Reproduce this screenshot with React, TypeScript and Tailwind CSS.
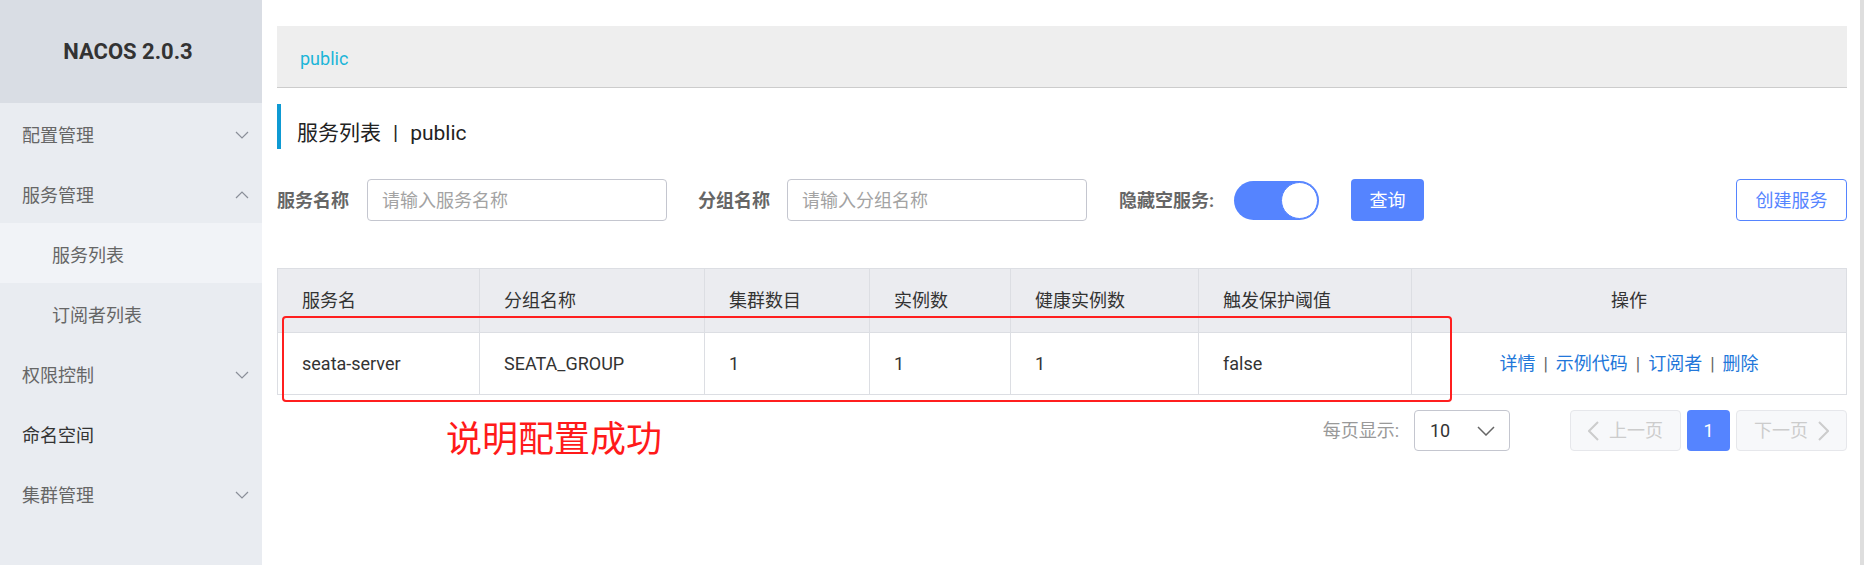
import React from "react";

const FONT = '"Roboto", "Noto Sans CJK SC", "Noto Sans", sans-serif';

function ChevronDown({ up = false }: { up?: boolean }) {
  return (
    <svg width="14" height="8" viewBox="0 0 14 8" fill="none" className="block">
      {up ? (
        <polyline points="1,7 7,1 13,7" stroke="#8a8f99" strokeWidth="1.2" fill="none" />
      ) : (
        <polyline points="1,1 7,7 13,1" stroke="#8a8f99" strokeWidth="1.2" fill="none" />
      )}
    </svg>
  );
}

function MenuItem({
  label,
  sub = false,
  selected = false,
  arrow,
  dark = false,
}: {
  label: string;
  sub?: boolean;
  selected?: boolean;
  arrow?: "up" | "down";
  dark?: boolean;
}) {
  return (
    <div
      className={`h-[60px] flex items-center justify-between pr-[13px] pt-[4px] text-[18px] ${
        sub ? "pl-[52px]" : "pl-[22px]"
      } ${selected ? "bg-[#f1f3f7]" : ""} ${dark ? "text-[#333333]" : "text-[#666666]"}`}
    >
      <span>{label}</span>
      {arrow ? <ChevronDown up={arrow === "up"} /> : null}
    </div>
  );
}

const cols = "grid grid-cols-[202px_225px_165px_141px_188px_213px_1fr]";

export default function App() {
  return (
    <div
      className="flex w-[1864px] h-[565px] bg-white overflow-hidden"
      style={{ fontFamily: FONT }}
    >
      {/* Sidebar */}
      <aside className="w-[262px] shrink-0 bg-[#e9ecf1] flex flex-col">
        <div className="h-[103px] bg-[#d9dde4] flex items-center justify-center text-[22px] font-bold text-[#333333] pr-[6px]">
          NACOS 2.0.3
        </div>
        <MenuItem label="配置管理" arrow="down" />
        <MenuItem label="服务管理" arrow="up" />
        <MenuItem label="服务列表" sub selected />
        <MenuItem label="订阅者列表" sub />
        <MenuItem label="权限控制" arrow="down" />
        <MenuItem label="命名空间" dark />
        <MenuItem label="集群管理" arrow="down" />
      </aside>

      {/* Main */}
      <main className="relative flex-1 pl-[15px] pr-[13px] pt-[26px]">
        {/* breadcrumb bar */}
        <div className="h-[62px] bg-[#eeeeee] border-b border-[#cccccc] flex items-center pl-[23px] pt-[4px] text-[18px] text-[#1bb5d8]">
          public
        </div>

        {/* title */}
        <div className="mt-[16px] h-[45px] border-l-4 border-[#0e9ad3] pl-[16px] pt-[14px] flex items-center text-[21px] text-[#222222]">
          <span>服务列表</span>
          <span className="mx-[12px]">|</span>
          <span>public</span>
        </div>

        {/* search row */}
        <div className="mt-[30px] h-[42px] flex items-center text-[18px]">
          <span className="font-bold text-[#666666]">服务名称</span>
          <div className="ml-[18px] w-[300px] h-[42px] border border-[#c4c6cf] rounded-[4px] pl-[14px] flex items-center text-[#a3a3a3]">
            请输入服务名称
          </div>
          <span className="ml-[31px] font-bold text-[#666666]">分组名称</span>
          <div className="ml-[17px] w-[300px] h-[42px] border border-[#c4c6cf] rounded-[4px] pl-[14px] flex items-center text-[#a3a3a3]">
            请输入分组名称
          </div>
          <span className="ml-[32px] font-bold text-[#666666]">隐藏空服务:</span>
          <div className="ml-[20px] w-[85px] h-[39px] rounded-full bg-[#5584ff] flex items-center justify-end pr-[1px]">
            <div className="w-[37px] h-[37px] rounded-full bg-white border border-[#5584ff]" />
          </div>
          <div className="ml-[32px] w-[73px] h-[42px] rounded-[4px] bg-[#5584ff] text-white flex items-center justify-center">
            查询
          </div>
          <div className="ml-auto w-[111px] h-[42px] rounded-[4px] border border-[#5584ff] text-[#5584ff] bg-white flex items-center justify-center">
            创建服务
          </div>
        </div>

        {/* table */}
        <div className="mt-[47px] border border-[#dcdee3] text-[18px] text-[#333333]">
          <div className={`${cols} bg-[#ebecf0] border-b border-[#dcdee3] h-[64px]`}>
            {["服务名", "分组名称", "集群数目", "实例数", "健康实例数", "触发保护阈值"].map((h) => (
              <div key={h} className="border-r border-[#dcdee3] flex items-center pl-[24px]">
                {h}
              </div>
            ))}
            <div className="flex items-center justify-center">操作</div>
          </div>
          <div className={`${cols} h-[61px]`}>
            {["seata-server", "SEATA_GROUP", "1", "1", "1", "false"].map((c, i) => (
              <div key={i} className="border-r border-[#dcdee3] flex items-center pl-[24px]">
                {c}
              </div>
            ))}
            <div className="flex items-center justify-center text-[#2277da]">
              <span>详情</span>
              <span className="mx-[8px] text-[#666666]">|</span>
              <span>示例代码</span>
              <span className="mx-[8px] text-[#666666]">|</span>
              <span>订阅者</span>
              <span className="mx-[8px] text-[#666666]">|</span>
              <span>删除</span>
            </div>
          </div>
        </div>

        {/* pagination */}
        <div className="mt-[15px] h-[41px] flex items-center justify-end text-[18px]">
          <span className="text-[#999999]">每页显示:</span>
          <div className="ml-[15px] w-[96px] h-[41px] border border-[#c4c6cf] rounded-[4px] flex items-center justify-between pl-[15px] pr-[14px] text-[#333333]">
            <span>10</span>
            <svg width="18" height="10" viewBox="0 0 18 10" fill="none">
              <polyline points="1,1 9,9 17,1" stroke="#666666" strokeWidth="1.5" fill="none" />
            </svg>
          </div>
          <div className="ml-[60px] w-[111px] h-[41px] border border-[#e6e7eb] bg-[#f7f8fa] rounded-[4px] flex items-center justify-center text-[#cccccc]">
            <svg width="11" height="20" viewBox="0 0 11 20" fill="none" className="mr-[10px]">
              <polyline points="10,1 1,10 10,19" stroke="#cccccc" strokeWidth="2" fill="none" />
            </svg>
            上一页
          </div>
          <div className="ml-[6px] w-[43px] h-[41px] rounded-[4px] bg-[#5584ff] text-white flex items-center justify-center">
            1
          </div>
          <div className="ml-[6px] w-[111px] h-[41px] border border-[#e6e7eb] bg-[#f7f8fa] rounded-[4px] flex items-center justify-center text-[#cccccc]">
            下一页
            <svg width="11" height="20" viewBox="0 0 11 20" fill="none" className="ml-[10px]">
              <polyline points="1,1 10,10 1,19" stroke="#cccccc" strokeWidth="2" fill="none" />
            </svg>
          </div>
        </div>

        {/* annotations */}
        <div className="absolute left-[20px] top-[316px] w-[1170px] h-[86px] border-2 border-[#ff1f1f] rounded-[4px] pointer-events-none" />
        <div className="absolute left-[184px] top-[418px] text-[36px] leading-[44px] text-[#ff1a1a]">
          说明配置成功
        </div>
      </main>

      <div className="w-[4px] shrink-0 bg-[#dedede]" />
    </div>
  );
}
